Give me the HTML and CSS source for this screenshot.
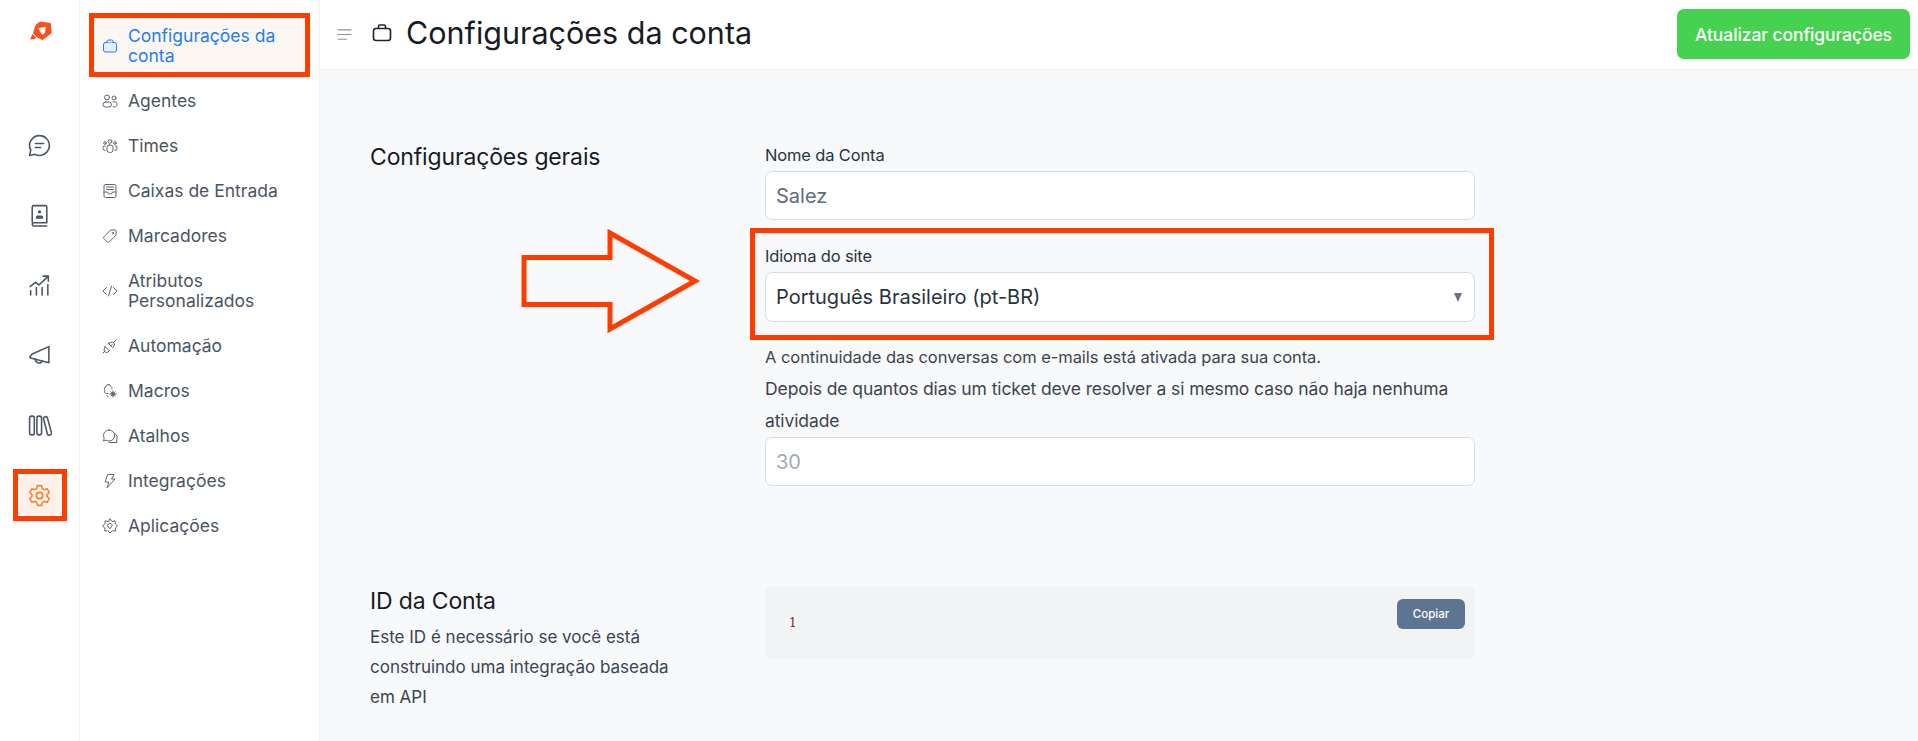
FILE: index.html
```html
<!DOCTYPE html>
<html lang="pt-BR">
<head>
<meta charset="utf-8">
<title>Configurações da conta</title>
<link rel="stylesheet" href="styles.css">
</head>
<body>
<div class="app">
  <nav class="rail">
    <svg class="logo" viewBox="0 0 22 21"><path fill="#f9501e" fill-rule="evenodd" d="M5.700 4.700 10 1.400 20.700 3l1 10-9.300 7.300-5.700-3.300L3 13z M8.400 8l7.300-1L15 13l-2.600 1.700L10 11.400z"/><path fill="#f9501e" d="M0 19.500 2.500 14 6 17.500 5 19z"/></svg>
    <div class="rail-icons">
      <span class="rail-btn"><svg viewBox="0 0 24 24" class="ic24"><path d="M12 2.500a9.500 9.500 0 1 1-4.300 18L2.500 21.500l1.100-5A9.500 9.500 0 0 1 12 2.500z"/><path d="M8 10h8M8 14h5"/></svg></span>
      <span class="rail-btn"><svg viewBox="0 0 24 24" class="ic24"><path d="M5 18V4a1.500 1.500 0 0 1 1.500-1.500h11A1.500 1.500 0 0 1 19 4v15H6.500A1.500 1.500 0 0 0 5 20.500 1.500 1.500 0 0 0 6.500 22H19"/><circle cx="12" cy="8.500" r="1.600" class="fill"/><path class="fill" d="M8.500 13.500c0-1 1-1.500 2-1.500h3c1 0 2 .5 2 1.500V15h-7z"/></svg></span>
      <span class="rail-btn"><svg viewBox="0 0 24 24" class="ic24"><path d="M3 13l5-4 3.500 2.500L20 3.500M15.500 3H20.500V8M3.500 17v4M9 14v7M14.500 14v7M20 11v10"/></svg></span>
      <span class="rail-btn"><svg viewBox="0 0 24 24" class="ic24"><path d="M21 3.500v15.500L3.500 14.500a1 1 0 0 1-.6-1.500L5 10.500z"/><path d="M8 15.500a3.500 3.500 0 0 0 6.500 2"/></svg></span>
      <span class="rail-btn"><svg viewBox="0 0 24 24" class="ic24"><rect x="2.500" y="3" width="4.500" height="18" rx="2"/><rect x="9.500" y="3" width="4.500" height="18" rx="2"/><path d="M16 4.200l1.500-.6a1.500 1.500 0 0 1 2 .8l4 14.600a1.500 1.500 0 0 1-1 1.900l-1 .3a1.500 1.500 0 0 1-1.900-1L16 6z"/></svg></span>
      <span class="rail-btn rail-btn-active"><svg viewBox="0 0 24 24" class="ic24"><path d="M10 2.500h4l.7 2.900 1.800 1 2.800-.9 2 3.500-2.100 2v2l2.100 2-2 3.500-2.800-.9-1.800 1-.7 2.900h-4l-.7-2.900-1.800-1-2.800.9-2-3.500 2.100-2v-2l-2.100-2 2-3.500 2.800.9 1.800-1z"/><circle cx="12" cy="12" r="3"/></svg></span>
    </div>
  </nav>

  <aside class="side">
    <a class="item item-active"><svg viewBox="0 0 16 16" class="ic16"><rect x="1.500" y="4.500" width="13" height="9.500" rx="2"/><path d="M5 4.500V3.200A1.200 1.200 0 0 1 6.200 2h3.600A1.200 1.200 0 0 1 11 3.200v1.300"/></svg><span>Configurações da conta</span></a>
    <a class="item"><svg viewBox="0 0 16 16" class="ic16"><circle cx="5" cy="4.500" r="2.500"/><circle cx="12" cy="5" r="2"/><rect x="1" y="9" width="8.500" height="5" rx="2.500"/><path d="M11 9h2.500a1.500 1.500 0 0 1 1.500 1.500v1A2.500 2.500 0 0 1 11 13.500"/></svg><span>Agentes</span></a>
    <a class="item"><svg viewBox="0 0 16 16" class="ic16"><circle cx="8" cy="3.500" r="1.800"/><circle cx="3" cy="5" r="1.300"/><circle cx="13" cy="5" r="1.300"/><rect x="5" y="7" width="6" height="7.500" rx="2.500"/><path d="M3 8H2a1 1 0 0 0-1 1v1.500A2 2 0 0 0 3 12.500M13 8h1a1 1 0 0 1 1 1v1.500a2 2 0 0 1-2 2"/></svg><span>Times</span></a>
    <a class="item"><svg viewBox="0 0 16 16" class="ic16"><rect x="2" y="1.500" width="12" height="13" rx="1.500"/><path d="M4.500 4h7M4.500 6.500h7M2 9h3.500a2.500 2 0 0 0 5 0H14"/></svg><span>Caixas de Entrada</span></a>
    <a class="item"><svg viewBox="0 0 16 16" class="ic16"><path d="M9 2h4a1 1 0 0 1 1 1v4.200l-7 7a1 1 0 0 1-1.400 0L1.800 10.400a1 1 0 0 1 0-1.400z"/><circle cx="11" cy="5" r=".6"/></svg><span>Marcadores</span></a>
    <a class="item"><svg viewBox="0 0 16 16" class="ic16"><path d="M4.500 4.500 1 8l3.500 3.500M11.500 4.500 15 8l-3.500 3.500M9.500 3l-3 10"/></svg><span>Atributos Personalizados</span></a>
    <a class="item"><svg viewBox="0 0 16 16" class="ic16"><path d="M1 15l2-2M3 8.500l4.500 4.500-1.500 1a2.500 2.500 0 0 1-3.500-3.500zM8.500 8 10 6.500M6.500 6 8 4.500M6.500 5.500l4 4 1.500-1.500a2.500 2.500 0 0 0-3.500-3.500zM12 4l2.500-2.500"/></svg><span>Automação</span></a>
    <a class="item"><svg viewBox="0 0 16 16" class="ic16"><path d="M6.500 1.500a2.500 2.500 0 0 0-2.500 2.200 2 2 0 0 0-1 3.500 2 2 0 0 0 1.500 3.300H6M6.500 1.500A2.500 2.500 0 0 1 9 3.500 2 2 0 0 1 10 6M5 12.500l1 1.500"/><circle cx="11" cy="11" r="2" class="fill"/><path d="M11 7.800v1M11 13.200v1M7.800 11h1M13.200 11h1M8.800 8.800l.7.7M12.500 12.500l.7.7M13.200 8.800l-.7.7M9.500 12.500l-.7.7"/></svg><span>Macros</span></a>
    <a class="item"><svg viewBox="0 0 16 16" class="ic16"><path d="M7 2a5.500 5.500 0 0 0-4.800 8.200L1.500 13l2.800-.8A5.500 5.500 0 1 0 7 2z"/><path d="M12.700 5.500a4.500 4.500 0 0 1 1.800 6.500l.5 2.500H7"/></svg><span>Atalhos</span></a>
    <a class="item"><svg viewBox="0 0 16 16" class="ic16"><path d="M6 1.500h6L9.500 6H13L5 14.800 6.800 9H3.500z"/></svg><span>Integrações</span></a>
    <a class="item"><svg viewBox="0 0 16 16" class="ic16"><path d="M8 1l2 2.500 3-.7.300 3L15.500 8l-2.200 2 .2 3-3-.3L8 15l-2.300-2.300-3 .3.200-3L.5 8l2.400-2.200.3-3 3 .7z"/><path d="M5.500 7 8 5l2.500 2L8 10.500z"/></svg><span>Aplicações</span></a>
  </aside>

  <main class="main">
    <header class="head">
      <svg viewBox="0 0 16 16" class="menu"><path d="M1 3h14M1 8h14M1 13h9"/></svg>
      <svg viewBox="0 0 20 20" class="case"><rect x="1.500" y="5.500" width="17" height="12" rx="2.500"/><path d="M6.500 5.500V3.500A1.500 1.500 0 0 1 8 2h4a1.500 1.500 0 0 1 1.500 1.500v2"/></svg>
      <h1 class="title">Configurações da conta</h1>
      <button class="save">Atualizar configurações</button>
    </header>
    <div class="content">
      <section class="row row-general">
        <div class="left"><h2 class="sect">Configurações gerais</h2></div>
        <div class="right">
          <label class="lab">Nome da Conta</label>
          <div class="field">Salez</div>
          <label class="lab lab-lang">Idioma do site</label>
          <div class="field field-select"><span>Português Brasileiro (pt-BR)</span><i class="caret"></i></div>
          <p class="note note-a">A continuidade das conversas com e-mails está ativada para sua conta.</p>
          <p class="note note-b">Depois de quantos dias um ticket deve resolver a si mesmo caso não haja nenhuma atividade</p>
          <div class="field field-ph">30</div>
        </div>
      </section>
      <section class="row row-id">
        <div class="left">
          <h2 class="sect">ID da Conta</h2>
          <p class="desc">Este ID é necessário se você está construindo uma integração baseada em API</p>
        </div>
        <div class="right">
          <div class="code"><code class="num">1</code><button class="copy">Copiar</button></div>
        </div>
      </section>
    </div>
  </main>
</div>

<div class="mark mark-menu"></div>
<div class="mark mark-gear"></div>
<div class="mark mark-lang"></div>
<svg class="arrow" viewBox="0 0 180 104"><path d="M3 28.500H89V4L174 52 89 100V75.500H3z"/></svg>
</body>
</html>
```
FILE: styles.css
```css
* { box-sizing: border-box; }
html, body { margin: 0; height: 741px; overflow: hidden; }
body { font-family: "Inter", "Liberation Sans", sans-serif; color: #1f2d3d; background: #fff; position: relative; }
.app { display: flex; height: 741px; }

.rail { width: 80px; flex: none; border-right: 1px solid #eef0f3; display: flex; flex-direction: column; align-items: center; background: #fff; }
.logo { width: 22px; height: 21px; margin-top: 20px; margin-left: 2px; }
.rail-icons { display: flex; flex-direction: column; gap: 30px; margin-top: 84px; }
.rail-btn { width: 40px; height: 40px; display: flex; align-items: center; justify-content: center; border-radius: 6px; }
.rail-btn-active { background: #fdf1ea; }
.rail-btn-active svg { stroke: #f97f2e; }
.ic24 { width: 25px; height: 25px; fill: none; stroke: #4b5563; stroke-width: 1.500; stroke-linecap: round; stroke-linejoin: round; }
.ic24 .fill { fill: #4b5563; stroke: none; }

.side { width: 240px; flex: none; border-right: 1px solid #eef0f3; background: #fff; padding: 16px 8px 0 8px; display: flex; flex-direction: column; gap: 5px; }
.item { display: flex; align-items: center; gap: 10px; padding: 10px 4px 10px 14px; font-size: 17.500px; line-height: 20px; color: #4b5563; letter-spacing: 0; }
.item-active { color: #1f7ef0; background: #fdf7f3; }
.item-active .ic16 { stroke: #1f7ef0; fill: #e3f0fd; }
.ic16 { width: 16px; height: 16px; flex: none; fill: none; stroke: #5a6573; stroke-width: 1; stroke-linecap: round; stroke-linejoin: round; }
.ic16 .fill { fill: #5a6573; stroke: none; }

.main { flex: 1; min-width: 0; display: flex; flex-direction: column; background: #f8f9fb; }
.head { height: 70px; flex: none; background: #fff; border-bottom: 1px solid #f0f1f3; display: flex; align-items: center; padding: 0 8px 0 17px; }
.menu { width: 15px; height: 15px; fill: none; stroke: #8b929c; stroke-width: 1.200; stroke-linecap: round; margin-right: 20px; }
.case { width: 20px; height: 20px; fill: none; stroke: #1c2530; stroke-width: 1.600; margin-right: 14px; margin-top: -4px; }
.title { margin: 0; font-size: 30.500px; line-height: 40px; font-weight: 400; color: #171c24; flex: 1; margin-top: -3px; }
.save { width: 233px; height: 50px; border: 0; border-radius: 7px; background: #46d151; color: #fff; font: 500 17.500px "Inter", sans-serif; letter-spacing: -.1px; margin-top: -1px; padding: 0; }

.content { padding: 0 50px; }
.row { display: flex; }
.row-general { padding-top: 72px; }
.row-id { padding-top: 100px; }
.left { width: 395px; flex: none; }
.right { width: 710px; flex: none; }
.sect { margin: 0; font-size: 23px; line-height: 30px; font-weight: 400; color: #171c24; letter-spacing: -.15px; }
.desc { margin: 6px 0 0; width: 322px; font-size: 17px; line-height: 30px; color: #3b4450; }
.lab { display: block; font-size: 16.500px; line-height: 24px; color: #2a3340; letter-spacing: -.15px; margin-bottom: 4px; margin-top: 1px; }
.lab-lang { margin-top: 24px; margin-bottom: 4px; }
.field { height: 49px; background: #fff; border: 1px solid #d5dde6; border-radius: 7px; padding: 0 10px; font-size: 20px; display: flex; align-items: center; color: #5f6b7a; }
.field-select { height: 50px; color: #2a3340; justify-content: space-between; position: relative; }
.field-ph { color: #a3aab4; margin-top: 0; }
.caret { width: 0; height: 0; border-left: 4.500px solid transparent; border-right: 4.500px solid transparent; border-top: 9px solid #6b7280; margin-right: 2px; }
.note { margin: 0; font-size: 16.500px; line-height: 31px; color: #3b4450; }
.note-a { margin-top: 20px; letter-spacing: -.05px; }
.note-b { font-size: 17.500px; line-height: 32px; letter-spacing: -.1px; }

.code { height: 73px; background: #f2f3f5; border-radius: 8px; position: relative; padding: 25px 0 0 24px; }
.num { font: 12px/20px "DejaVu Serif", "Liberation Serif", serif; color: #7a1f2b; }
.copy { position: absolute; top: 13px; right: 10px; width: 68px; height: 30px; border: 0; border-radius: 6px; background: #5d7592; color: #fff; font: 500 11.500px "Inter", sans-serif; padding: 0; }

.mark { position: absolute; border: 5px solid #ff3d00; pointer-events: none; }
.mark-menu { left: 89px; top: 13px; width: 221px; height: 64px; }
.mark-gear { left: 13px; top: 469px; width: 54px; height: 52px; }
.mark-lang { left: 750px; top: 228px; width: 744px; height: 112px; }
.arrow { position: absolute; left: 521px; top: 229px; width: 180px; height: 104px; fill: none; stroke: #ff3d00; stroke-width: 5; pointer-events: none; }
```
